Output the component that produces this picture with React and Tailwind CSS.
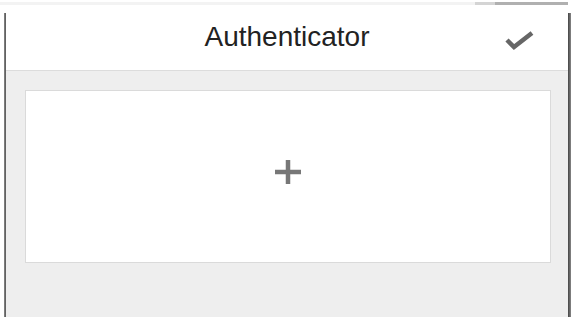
export default function App() {
  return (
    <div className="w-[575px] h-[322px] bg-white overflow-hidden" style={{ fontFamily: '"Liberation Sans", Arial, sans-serif' }}>
      <div className="flex h-[3px] mt-[2px]">
        <div className="w-[475px] bg-[#f3f3f3]" />
        <div className="w-[20px] bg-[#d4d4d4]" />
        <div className="w-[73px] bg-[#b0b0b0]" />
      </div>
      <div className="flex h-[312px]">
        <div className="w-[4px]" />
        <div className="w-[2px] mt-[8px] bg-gradient-to-r from-[#8a8a8a] to-[#555]" />
        <div className="w-[562px] flex flex-col">
          <div className="h-[66px] flex items-center border-b border-[#dcdcdc] bg-white relative">
            <div className="flex-1 text-center text-[28px] text-[#222] leading-none pb-[1px]">Authenticator</div>
            <svg className="absolute left-[498px] top-[25px]" width="32" height="22" viewBox="0 0 32 22">
              <polyline points="3,10 10,17 28,3" fill="none" stroke="#666" strokeWidth="4.5" strokeLinejoin="miter" />
            </svg>
          </div>
          <div className="flex-1 bg-[#eeeeee] pl-[19px] pr-[17px] pt-[19px]">
            <div className="h-[173px] bg-white border border-[#dadada] flex items-center justify-center pb-[10px]">
              <svg width="28" height="26" viewBox="0 0 28 26">
                <line x1="1" y1="13" x2="27" y2="13" stroke="#777" strokeWidth="4.5" />
                <line x1="14" y1="1" x2="14" y2="25" stroke="#777" strokeWidth="4.5" />
              </svg>
            </div>
          </div>
        </div>
        <div className="w-[3px] mt-[8px] bg-gradient-to-r from-[#444] to-[#888]" />
      </div>
    </div>
  );
}
